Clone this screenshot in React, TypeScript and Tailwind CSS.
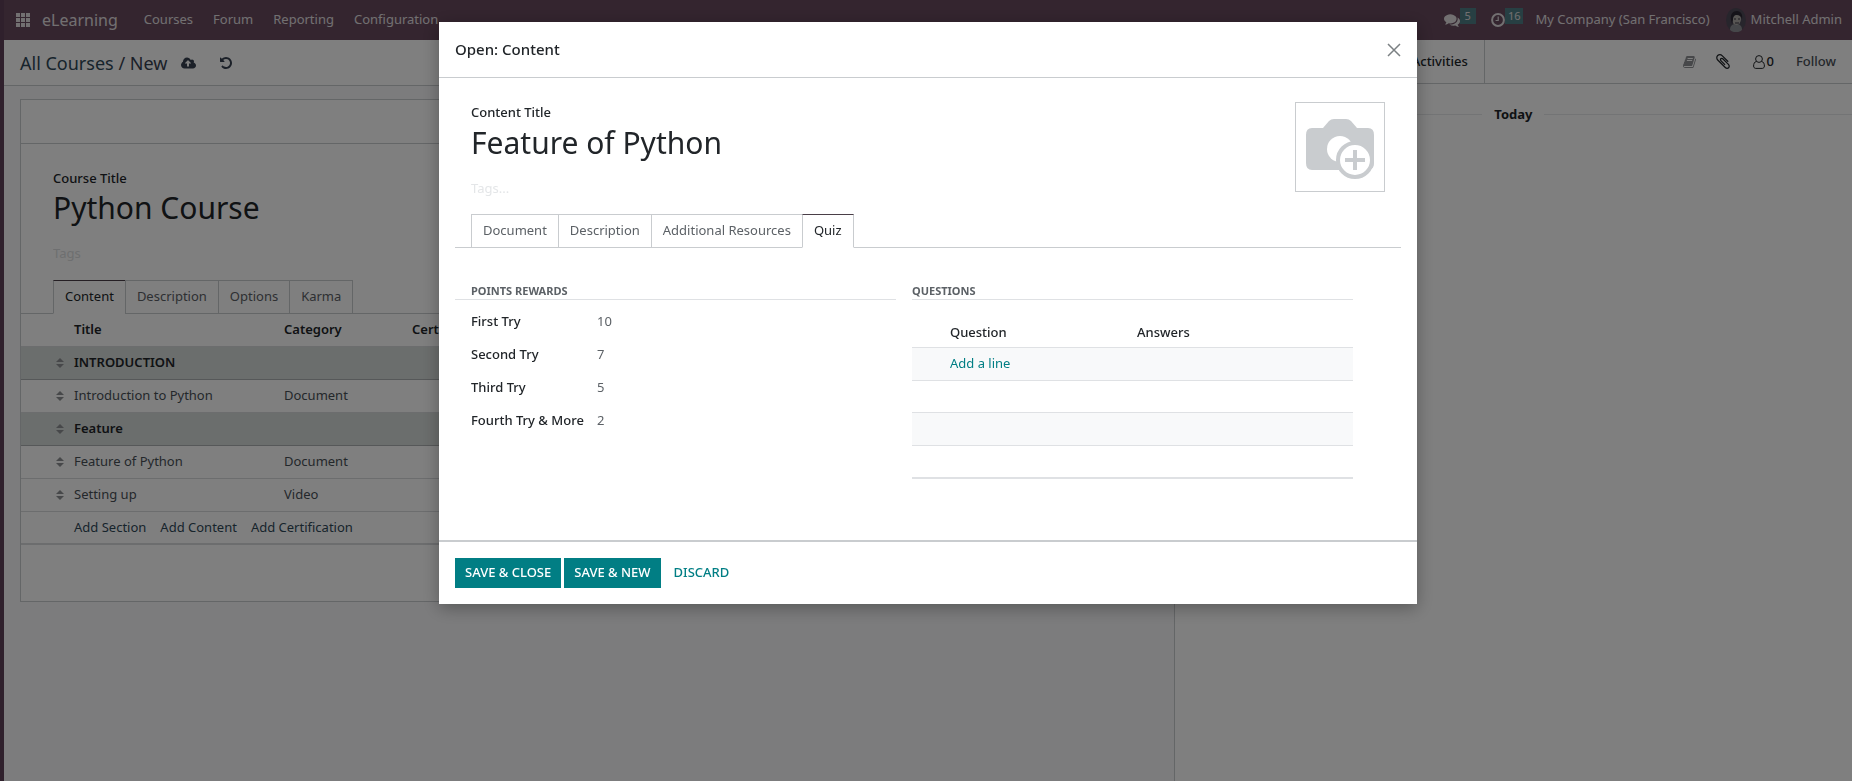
import type { ReactNode } from "react";
import clsx from "clsx";

const Icon = ({ box, className, children }: { box: string; className: string; children: ReactNode }) => (
    <svg viewBox={box} className={clsx("shrink-0 fill-current", className)} aria-hidden="true">
        {children}
    </svg>
);

const CloudUpload = () => (
    <Icon box="0 0 1920 1792" className="h-[14px] w-[15px]">
        <path d="M1280 928q0-14-9-23l-352-352q-9-9-23-9t-23 9l-351 351q-10 12-10 24 0 14 9 23t23 9h224v352q0 13 9.5 22.5t22.5 9.5h192q13 0 22.5-9.5t9.5-22.5v-352h224q13 0 22.5-9.5t9.5-22.5zm640 288q0 159-112.5 271.5t-271.5 112.5h-1088q-185 0-316.5-131.5t-131.5-316.5q0-130 70-240t188-165q-2-30-2-43 0-212 150-362t362-150q156 0 285.5 87t188.5 231q71-62 166-62 106 0 181 75t75 181q0 76-41 138 130 31 213.5 135.5t83.5 238.5z" />
    </Icon>
);

const Undo = () => (
    <Icon box="0 0 1536 1792" className="h-[14px] w-[12px]">
        <path d="M1536 896q0 156-61 298t-164 245-245 164-298 61q-172 0-327-72.5t-264-204.5q-7-10-6.5-22.5t8.5-20.5l137-138q10-9 25-9 16 2 23 12 73 95 179 147t225 52q104 0 198.5-40.5t163.5-109.5 109.5-163.5 40.5-198.5-40.5-198.5-109.5-163.5-163.5-109.5-198.5-40.5q-98 0-188 35.5t-160 101.5l137 138q31 30 14 69-17 40-59 40h-448q-26 0-45-19t-19-45v-448q0-42 40-59 39-17 69 14l130 129q107-101 244.5-156.5t284.5-55.5q156 0 298 61t245 164 164 245 61 298z" />
    </Icon>
);

const Comments = () => (
    <Icon box="0 0 1792 1792" className="size-4">
        <path d="M1408 768q0 139-94 257t-256.5 186.5-353.5 68.5q-86 0-176-16-124 88-278 128-36 9-86 16h-3q-11 0-20.5-8t-11.5-21q-1-3-1-6.5t.5-6.5 2-6l2.5-5 3.5-5.5 4-5 4.5-5 4-4.5q5-6 23-25t26-29.5 22.5-29 25-38.5 20.5-44q-124-72-195-177t-71-224q0-139 94-257t256.5-186.5 353.5-68.5 353.5 68.5 256.5 186.5 94 257zm384 256q0 120-71 224.5t-195 176.5q10 24 20.5 44t25 38.5 22.5 29 26 29.5 23 25q1 1 4 4.5t4.5 5 4 5 3.5 5.5l2.5 5 2 6 .5 6.5-1 6.5q-3 14-13 22t-22 7q-50-7-86-16-154-40-278-128-90 16-176 16-271 0-472-132 58 4 88 4 161 0 309-45t264-129q125-92 192-212t67-254q0-77-23-152 129 71 204 178t75 230z" />
    </Icon>
);

const Clock = () => (
    <Icon box="0 0 14 14" className="size-[14px]">
        <circle cx="7" cy="7" r="5.9" fill="none" stroke="currentColor" strokeWidth="2" />
        <path d="M6.6 3.5h1.2v4.6H4.6V6.9h2z" />
    </Icon>
);

const Book = () => (
    <Icon box="0 0 1664 1792" className="h-[14px] w-[13px]">
        <path d="M1639 478q40 57 18 129l-275 906q-19 64-76.5 107.5t-122.5 43.5h-923q-77 0-148.5-53.5t-99.5-131.5q-24-67-2-127 0-4 3-27t4-37q1-8-3-21.5t-3-19.5q2-11 8-21t16.5-23.5 16.5-23.5q23-38 45-91.5t30-91.5q3-10 .5-30t-.5-28q3-11 17-28t17-23q21-36 42-92t25-90q1-9-2.5-32t.5-28q4-13 22-30.5t22-22.5q19-26 42.5-84.5t27.5-96.5q1-8-3-25.5t-2-26.5q2-8 9-18t18-23 17-21q8-12 16.5-30.5t15-35 16-36 19.5-32 26.5-23.5 36-11.5 47.5 5.5l-1 3q38-9 51-9h761q74 0 114 56t18 130l-274 906q-36 119-71.5 153.5t-128.5 34.5h-869q-27 0-38 15-11 16-1 43 24 70 144 70h923q29 0 56-15.5t35-41.5l300-987q7-22 5-57 38 15 59 43zm-1064 2q-4 13 2 22.5t20 9.5h608q13 0 25.5-9.5t16.5-22.5l21-64q4-13-2-22.5t-20-9.5h-608q-13 0-25.5 9.5t-16.5 22.5zm-83 256q-4 13 2 22.5t20 9.5h608q13 0 25.5-9.5t16.5-22.5l21-64q4-13-2-22.5t-20-9.5h-608q-13 0-25.5 9.5t-16.5 22.5z" />
    </Icon>
);

const Paperclip = () => (
    <Icon box="192 128 1408 1536" className="h-[15px] w-[14px]">
        <path d="M1596 1385q0 117-79 196t-196 79q-135 0-235-100l-777-776q-113-115-113-271 0-159 110-270t269-111q158 0 273 113l605 606q10 10 10 22 0 16-30.5 46.5t-46.5 30.5q-13 0-23-10l-606-607q-79-77-181-77-106 0-179 75t-73 181q0 105 76 181l776 777q63 63 145 63 64 0 106-42t42-106q0-82-63-145l-581-581q-26-24-60-24-29 0-48 19t-19 48q0 32 25 59l410 410q10 10 10 22 0 16-31 47t-47 31q-12 0-22-10l-410-410q-63-61-63-149 0-82 57-139t139-57q88 0 149 63l581 581q100 98 100 235z" />
    </Icon>
);

const UserOutline = () => (
    <svg viewBox="0 0 12 14" className="h-[14px] w-[12px] fill-none stroke-current" aria-hidden="true">
        <circle cx="6" cy="4" r="3.4" />
        <path d="M3.4 6.4C1.4 6.9.6 8.8.6 11c0 1.400.9 2.400 2.100 2.400h6.600c1.200 0 2.100-1 2.100-2.400 0-2.200-.8-4.100-2.800-4.600" />
    </svg>
);

const AppsGrid = () => (
    <Icon box="0 0 14 14" className="size-[14px]">
        {[0, 5, 10].map((y) => [0, 5, 10].map((x) => <rect key={`${x}-${y}`} x={x} y={y} width="4" height="4" />))}
    </Icon>
);

const Handle = () => (
    <Icon box="0 0 8 10" className="h-[10px] w-2">
        <path d="M4 0 8 4H0zM4 10 0 6h8z" />
    </Icon>
);

const Avatar = () => (
    <svg viewBox="0 0 20 24" className="h-6 w-5" aria-hidden="true">
        <ellipse cx="10" cy="12" rx="10" ry="12" fill="#4f4a58" />
        <path d="M4 22c0-5 3-6 6-6s6 1 6 6c-3 3-9 3-12 0z" fill="#8d8f94" />
        <ellipse cx="10.500" cy="11" rx="4.500" ry="6" fill="#b0aca9" />
        <path d="M5 12c-1-6 2-9 6-9 4 0 6 4 5 8-1-3-3-4-5-4-3 0-4 2-4 5l-1 4z" fill="#2b2733" />
        <path d="M8 11h2M12 11h2M9 15h4" stroke="#3b3641" />
    </svg>
);

const CameraPlus = () => (
    <svg viewBox="0 0 70 62" className="mt-1 w-[70px]" aria-hidden="true">
        <path
            d="M7 10h11l6-7q2-2 5-2h12q3 0 5 2l6 7h11q6 0 6 7v28q0 7-6 7H7q-6 0-6-7V17q0-7 6-7z"
            fill="#c9cccf"
        />
        <circle cx="35" cy="31" r="13" fill="#fff" />
        <circle cx="50" cy="42" r="17" fill="#fff" stroke="#c9cccf" strokeWidth="4" />
        <path d="M50 32v20M40 42h20" stroke="#c9cccf" strokeWidth="4" />
    </svg>
);

const Tabs = ({ items, active }: { items: string[]; active: string }) => (
    <div role="tablist" className="flex border-b border-[#c9cccf] pl-8 group-[.modal]:pl-4">
        {items.map((item) => (
            <button
                key={item}
                role="tab"
                aria-selected={item === active}
                className={clsx(
                    "-mb-px -ml-px h-[34px] border px-[11px] first:ml-0",
                    item === active
                        ? "border-[#c9cccf] border-t-[#4a3f48] border-b-white bg-white text-[#212529]"
                        : "border-[#c9cccf] text-[#5c6166]"
                )}
            >
                {item}
            </button>
        ))}
    </div>
);

const Navbar = () => (
    <header className="flex h-10 items-center bg-[#684a5e] pr-[10px] pl-3 text-[#e4e0e3]">
        <button aria-label="Apps">
            <AppsGrid />
        </button>
        <a href="#" className="mr-[26px] ml-3 text-base">eLearning</a>
        <nav className="flex gap-5">
            <a href="#">Courses</a>
            <a href="#">Forum</a>
            <a href="#">Reporting</a>
            <a href="#">Configuration</a>
        </nav>
        <div className="ml-auto flex items-center">
            <button className="flex items-center" aria-label="5 messages">
                <Comments />
                <span className="mb-2 bg-[#4f7f86] px-[5px] text-[11px] leading-4">5</span>
            </button>
            <button className="ml-[15px] flex items-center" aria-label="16 activities">
                <Clock />
                <span className="mb-2 bg-[#4f7f86] px-[3px] text-[11px] leading-4">16</span>
            </button>
            <button className="ml-3">My Company (San Francisco)</button>
            <button className="ml-4 flex items-center gap-[5px]">
                <Avatar />
                Mitchell Admin
            </button>
        </div>
    </header>
);

const lessons = [
    { title: "INTRODUCTION", section: true },
    { title: "Introduction to Python", category: "Document" },
    { title: "Feature", section: true },
    { title: "Feature of Python", category: "Document" },
    { title: "Setting up", category: "Video" },
];

const CourseForm = () => (
    <section className="flex-[19] border-r border-[#c9cccf] bg-[#f8f9fa]">
        <div className="flex h-[46px] items-center border-b border-[#c9cccf] bg-white px-4 text-[#374151]">
            <h1 className="text-lg">
                <a href="#" className="text-[#2f4858]">All Courses</a> / New
            </h1>
            <button aria-label="Save" className="ml-[14px]"><CloudUpload /></button>
            <button aria-label="Discard changes" className="ml-6"><Undo /></button>
        </div>
        <div className="mx-4 mt-[13px] border border-[#c9cccf] bg-white pb-14">
            <div className="h-11 border-b border-[#c9cccf]" />
            <div className="px-8 pt-6">
                <label htmlFor="course-title" className="block font-medium leading-5">Course Title</label>
                <input
                    id="course-title"
                    defaultValue="Python Course"
                    className="block h-[38px] w-full text-[30px] text-[#212529] outline-none"
                />
                <input
                    aria-label="Tags"
                    placeholder="Tags"
                    className="my-[17px] block h-5 w-full outline-none placeholder:text-[#dcdee0]"
                />
            </div>
            <Tabs items={["Content", "Description", "Options", "Karma"]} active="Content" />
            <table className="w-full table-fixed border-b-2 border-[#d8dadd] text-left">
                <colgroup>
                    <col className="w-[53px]" />
                    <col className="w-[210px]" />
                    <col className="w-32" />
                    <col />
                </colgroup>
                <thead>
                    <tr className="h-8 border-b border-[#d8dadd]">
                        <th />
                        <th className="font-semibold">Title</th>
                        <th className="font-semibold">Category</th>
                        <th className="font-semibold">Certified</th>
                    </tr>
                </thead>
                <tbody>
                    {lessons.map(({ title, category, section }) => (
                        <tr
                            key={title}
                            className={clsx(
                                "h-[33px] border-b",
                                section ? "border-[#adb0b2] bg-[#d7dcda] font-semibold" : "border-[#d8dadd] text-[#495057]"
                            )}
                        >
                            <td className="pl-[35px] text-[#8e9194]"><Handle /></td>
                            <td>{title}</td>
                            <td>{category}</td>
                            <td />
                        </tr>
                    ))}
                    <tr className="h-[33px]">
                        <td />
                        <td colSpan={3}>
                            <div className="flex gap-[14px] text-[#2f4858]">
                                <a href="#">Add Section</a>
                                <a href="#">Add Content</a>
                                <a href="#">Add Certification</a>
                            </div>
                        </td>
                    </tr>
                </tbody>
            </table>
        </div>
    </section>
);

const Chatter = () => (
    <aside className="flex-[11] bg-white">
        <div className="flex h-11 items-center border-b border-[#c9cccf] pr-4 font-medium">
            <div className="flex h-full w-[310px] items-center justify-end border-r border-[#c9cccf] pr-4">
                <button>Activities</button>
            </div>
            <div className="ml-auto flex items-center">
                <button aria-label="Log" className="text-[#8e9194]"><Book /></button>
                <button aria-label="Attach files" className="ml-5"><Paperclip /></button>
                <button className="ml-[23px] flex items-center gap-[2px]">
                    <UserOutline />
                    0
                </button>
                <button className="ml-[22px] text-[#495057]">Follow</button>
            </div>
        </div>
        <div className="mt-5 flex items-center gap-3">
            <hr className="flex-1 border-[#e6e8ea]" />
            <strong className="leading-5">Today</strong>
            <hr className="flex-1 border-[#e6e8ea]" />
        </div>
    </aside>
);

const rewards = [
    { id: "first", label: "First Try", points: 10 },
    { id: "second", label: "Second Try", points: 7 },
    { id: "third", label: "Third Try", points: 5 },
    { id: "fourth", label: "Fourth Try & More", points: 2 },
];

const ContentDialog = () => (
    <div
        role="dialog"
        aria-modal="true"
        aria-labelledby="dialog-title"
        className="group modal w-full max-w-[978px] self-start bg-white shadow-[0_4px_16px_rgba(0,0,0,0.3)]"
    >
        <div className="flex h-14 items-center justify-between border-b border-[#c9cccf] px-4">
            <h2 id="dialog-title" className="text-[15px] font-medium">Open: Content</h2>
            <button aria-label="Close">
                <svg viewBox="0 0 14 14" className="size-[14px] stroke-[#7b8083]" aria-hidden="true">
                    <path d="M1 1l12 12M13 1 1 13" strokeWidth="1.500" />
                </svg>
            </button>
        </div>
        <div className="px-4 pb-[61px]">
            <div className="flex px-4 pt-6">
                <div className="flex-1">
                    <label htmlFor="content-title" className="block font-medium leading-5">Content Title</label>
                    <input
                        id="content-title"
                        defaultValue="Feature of Python"
                        className="block h-10 w-full text-[30px] text-[#212529] outline-none"
                    />
                    <input
                        aria-label="Tags"
                        placeholder="Tags..."
                        className="my-4 block h-5 w-full outline-none placeholder:text-[#e4e6e8]"
                    />
                </div>
                <button
                    aria-label="Upload image"
                    className="flex size-[90px] items-center justify-center border border-[#c9cccf]"
                >
                    <CameraPlus />
                </button>
            </div>
            <Tabs items={["Document", "Description", "Additional Resources", "Quiz"]} active="Quiz" />
            <div className="flex gap-4 pt-8">
                <section className="w-[441px]">
                    <h3 className="h-5 border-b border-[#dfe1e4] pl-4 text-[11px] leading-[22px] font-bold text-[#5c6166]">
                        POINTS REWARDS
                    </h3>
                    <div className="pt-[5px]">
                        {rewards.map(({ id, label, points }) => (
                            <div key={id} className="flex h-[33px] items-center pl-4">
                                <label htmlFor={id} className="w-[126px] font-medium">{label}</label>
                                <input id={id} defaultValue={points} className="w-20 text-[#5c6166] outline-none" />
                            </div>
                        ))}
                    </div>
                </section>
                <section className="mr-12 flex-1">
                    <h3 className="h-5 border-b border-[#dfe1e4] text-[11px] leading-[22px] font-bold text-[#5c6166]">
                        QUESTIONS
                    </h3>
                    <table className="mt-[15px] w-full table-fixed border-b-2 border-[#dfe1e4] text-left">
                        <colgroup>
                            <col className="w-[38px]" />
                            <col className="w-[187px]" />
                            <col />
                        </colgroup>
                        <thead>
                            <tr className="h-8 border-b border-[#dfe1e4]">
                                <th />
                                <th className="pt-1 font-medium">Question</th>
                                <th className="pt-1 font-medium">Answers</th>
                            </tr>
                        </thead>
                        <tbody>
                            <tr className="h-[33px] border-b border-[#dfe1e4] bg-[#f8f9fa]">
                                <td />
                                <td colSpan={2}><a href="#" className="text-[#017e84]">Add a line</a></td>
                            </tr>
                            <tr className="h-8 border-b border-[#dfe1e4]"><td colSpan={3} /></tr>
                            <tr className="h-[33px] border-b border-[#dfe1e4] bg-[#f8f9fa]"><td colSpan={3} /></tr>
                            <tr className="h-[33px]"><td colSpan={3} /></tr>
                        </tbody>
                    </table>
                </section>
            </div>
        </div>
        <div className="flex gap-[3px] border-t-2 border-[#c9cccf] p-4 font-medium">
            <button className="h-[30px] bg-[#017e84] px-[10px] text-white">SAVE &amp; CLOSE</button>
            <button className="h-[30px] bg-[#017e84] px-[10px] text-white">SAVE &amp; NEW</button>
            <button className="h-[30px] px-[10px] text-[#017e84]">DISCARD</button>
        </div>
    </div>
);

const App = () => (
    <div className="flex min-h-screen bg-[#5e4158] pl-1 font-['Noto_Sans',sans-serif] text-[13px] text-[#212529]">
        <div className="flex flex-1 flex-col">
            <Navbar />
            <main className="flex flex-1">
                <CourseForm />
                <Chatter />
            </main>
        </div>
        <div className="fixed inset-0 flex justify-center bg-black/50 pt-[22px] pl-1">
            <ContentDialog />
        </div>
    </div>
);

export default App;
